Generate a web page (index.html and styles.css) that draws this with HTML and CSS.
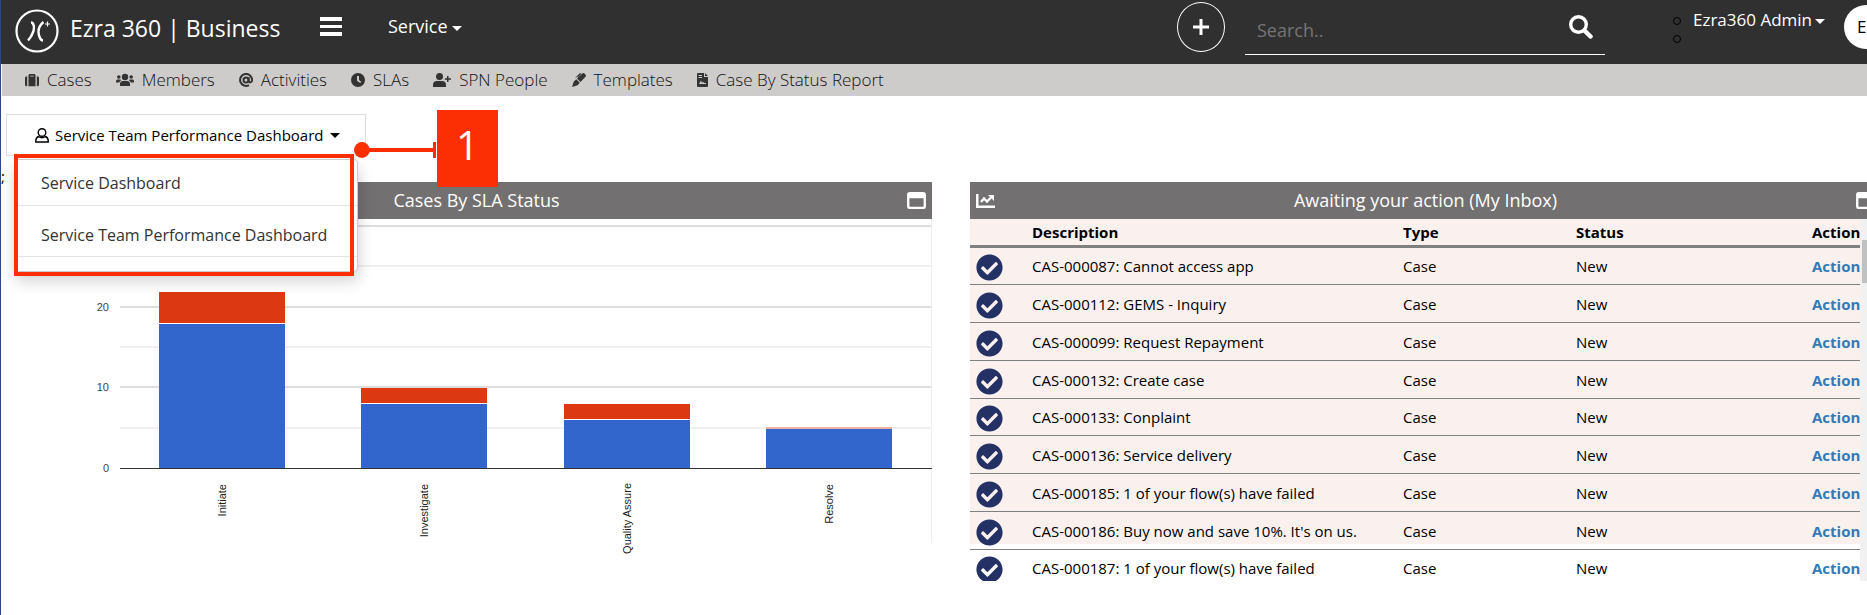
FILE: index.html
```html
<!DOCTYPE html>
<html lang="en">
<head>
<meta charset="utf-8">
<title>Ezra 360 | Business</title>
<link rel="stylesheet" href="styles.css">
</head>
<body>
<svg class="sprite" aria-hidden="true">
  <symbol id="check" viewBox="0 0 512 512"><path d="M504 256c0 137-111 248-248 248S8 393 8 256 119 8 256 8s248 111 248 248zM227.300 387.300l184-184c6.200-6.200 6.200-16.400 0-22.600l-22.600-22.600c-6.200-6.200-16.400-6.200-22.600 0L216 308.100l-70.100-70.100c-6.200-6.200-16.400-6.200-22.600 0l-22.600 22.600c-6.200 6.200-6.200 16.400 0 22.600l104 104c6.200 6.300 16.400 6.300 22.600.1z"/></symbol>
  <symbol id="window" viewBox="0 0 20 18"><path fill-rule="evenodd" d="M3 0h14a3 3 0 0 1 3 3v12a3 3 0 0 1-3 3H3a3 3 0 0 1-3-3V3a3 3 0 0 1 3-3zM2.500 6.500v8.500a.5.500 0 0 0 .5.500h14a.5.500 0 0 0 .5-.5V6.500z"/></symbol>
  <symbol id="trend" viewBox="0 0 19 14"><path d="M0 0h2.500v11.500H19V14H0z"/><path d="M5 8l3-3.500 3 3L15 3.500" fill="none" stroke="#fff" stroke-width="2.400"/><path d="M12 1h6v6z"/></symbol>
</svg>
<header class="topbar">
  <a class="brand" href="#">
    <svg class="logo" viewBox="0 0 44 44" fill="none" stroke="#fff"><circle cx="22" cy="22" r="20.500" stroke-width="2.200"/><path stroke-width="2.400" d="M16 13.500c3 0 3.500 5.500 2.500 8.500s-3 7-5.500 9.500M28.500 13c-3 2.500-5 6-5 9.500s1.500 9 4.500 9"/><path stroke-width="1.200" d="M32.500 12.500v5M30 15h5"/></svg>
    <span>Ezra 360 | Business</span>
  </a>
  <button class="burger" aria-label="Menu"><svg viewBox="0 0 22 19"><path d="M0 0h22v4H0zM0 8h22v3H0zM0 15h22v4H0z"/></svg></button>
  <button class="service">Service <i class="caret"></i></button>
  <button class="add" aria-label="Add"><svg viewBox="0 0 16 16"><path d="M6.500 0h3v6.500H16v3H9.500V16h-3V9.500H0v-3h6.500z"/></svg></button>
  <form class="search">
    <input type="text" placeholder="Search.." aria-label="Search">
    <button type="button" aria-label="Search"><svg viewBox="0 0 24 24" fill="none" stroke="#fff"><circle cx="9.500" cy="9.500" r="7.800" stroke-width="3.400"/><path stroke-width="4.500" stroke-linecap="round" d="M16 16l5.500 5.500"/></svg></button>
  </form>
  <div class="account">
    <div class="dots"><i></i><i></i></div>
    <button class="admin">Ezra360 Admin<i class="caret"></i></button>
    <span class="avatar">Ez</span>
  </div>
</header>
<nav class="menu">
  <a href="#"><svg viewBox="0 0 16 14"><path fill-rule="evenodd" d="M2.500 3v11H1.500A1.500 1.500 0 0 1 0 12.500v-8A1.500 1.500 0 0 1 1.500 3zM13.500 3h1A1.500 1.500 0 0 1 16 4.500v8a1.500 1.500 0 0 1-1.500 1.500h-1zM4 14V1.500A1.500 1.500 0 0 1 5.500 0h5A1.500 1.500 0 0 1 12 1.500V14zM6 2v1h4V2z"/></svg>Cases</a>
  <a href="#"><svg class="wide" viewBox="0 0 18 14"><circle cx="9" cy="4" r="3.200"/><circle cx="2.800" cy="4" r="1.800"/><circle cx="15.200" cy="4" r="1.800"/><path d="M4 13v-2a3 3 0 0 1 3-3h4a3 3 0 0 1 3 3v2zM0 9V8a1.500 1.500 0 0 1 1.500-1.500h3L5 7.500Q3.500 8 3.300 9.500H0zM18 9V8a1.500 1.500 0 0 0-1.500-1.500h-3l-.5 1q1.500.5 1.700 2H18z"/></svg>Members</a>
  <a href="#"><svg class="line" viewBox="0 0 14 14"><circle cx="7" cy="7" r="2.500"/><path d="M9.700 4.300v4c0 1.500 3.400 1.800 3.400-1.300A6 6 0 1 0 10 12.200"/></svg>Activities</a>
  <a href="#"><svg viewBox="0 0 14 14"><path fill-rule="evenodd" d="M7 0a7 7 0 1 1 0 14A7 7 0 0 1 7 0zM6 3v4.700l3.200 2.400 1-1.400L8 7V3z"/></svg>SLAs</a>
  <a href="#"><svg class="wide" viewBox="0 0 18 14"><circle cx="6.500" cy="3.500" r="3.500"/><path d="M0 14v-2a4 4 0 0 1 4-4h5a4 4 0 0 1 4 4v2zM14 3h1.500v2.200H18v1.600h-2.500V9H14V6.800h-2.200V5.200H14z"/></svg>SPN People</a>
  <a href="#"><svg viewBox="0 0 14 14"><path d="M10 .7a2 2 0 0 1 2.800.2l.4.400a2 2 0 0 1 .1 2.800L8.500 9 5 5.500zM4.300 6.200l3.500 3.500-2.300 2.500L0 14l1.800-5.500zM3.500 4.500L7.500.6q1-.8 2 0L6 4.200l-1-.8-1 1.600z"/></svg>Templates</a>
  <a href="#"><svg class="doc" viewBox="0 0 11 14"><path fill-rule="evenodd" d="M0 1a1 1 0 0 1 1-1h6v4h4v9a1 1 0 0 1-1 1H1a1 1 0 0 1-1-1zM8 0l3 3H8zM1.500 2v1H5V2zM1.500 4v1H5V4zM2 11h7v-1H7L6 8.500 5 10 4 7.500z"/></svg>Case By Status Report</a>
</nav>
<main class="page">
  <div class="picker">
    <button class="current"><svg viewBox="0 0 14 15" fill="none" stroke="#000" stroke-width="1.400"><circle cx="7" cy="4.500" r="3.800"/><path d="M3.500 8.500C1.500 9.500.8 11 .8 12.500V14h12.400v-1.500c0-1.500-.7-3-2.700-4Q7 11 3.500 8.500z"/></svg>Service Team Performance Dashboard <i class="caret"></i></button>
    <ul class="options">
      <li><a href="#">Service Dashboard</a></li>
      <li><a href="#">Service Team Performance Dashboard</a></li>
    </ul>
    <div class="outline"></div>
    <div class="callout">
      <svg viewBox="0 0 84 20"><circle cx="8" cy="10" r="8"/><path d="M8 8h72V2h3v16h-3v-6H8z"/></svg>
      <b>1</b>
    </div>
  </div>
  <div class="stray">;</div>
  <div class="panels">
    <section class="panel">
      <header><svg class="trend"><use href="#trend"/></svg><h2>Cases By SLA Status</h2><svg class="win"><use href="#window"/></svg></header>
      <svg class="chart" viewBox="15 0 911 344" role="img" aria-label="Cases by SLA status">
        <g class="major"><path d="M114 7h812M114 88h812M114 168h812"/></g>
        <g class="minor"><path d="M114 47h812M114 128h812M114 209h812"/></g>
        <path class="edge" d="M925 0h1v324h-1z"/>
        <path class="red" d="M153 73h126v31H153zM355 169h126v15H355zM558 185h126v15H558z"/>
        <path class="blue" d="M153 105h126v144H153zM355 185h126v64H355zM558 201h126v48H558zM760 210h126v39H760z"/>
        <path class="pink" d="M760 208h126v2H760z"/>
        <path class="axis" d="M114 249h812v1H114z"/>
        <g class="scale"><text x="103" y="92">20</text><text x="103" y="172">10</text><text x="103" y="253">0</text></g>
        <g class="names">
          <text transform="translate(220 265) rotate(-90)">Initiate</text>
          <text transform="translate(422 265) rotate(-90)">Investigate</text>
          <text transform="translate(625 264) rotate(-90)">Quality Assure</text>
          <text transform="translate(827 265) rotate(-90)">Resolve</text>
        </g>
      </svg>
    </section>
    <section class="panel inbox">
      <header><svg class="trend"><use href="#trend"/></svg><h2>Awaiting your action (My Inbox)</h2><svg class="win"><use href="#window"/></svg></header>
      <div class="scroller">
        <div class="rows">
          <table>
            <thead><tr><th class="c-icon"></th><th class="c-desc">Description</th><th class="c-type">Type</th><th class="c-status">Status</th><th class="c-action">Action</th></tr></thead>
            <tbody>
              <tr><td><svg><use href="#check"/></svg></td><td>CAS-000087: Cannot access app</td><td>Case</td><td>New</td><td><a href="#">Action</a></td></tr>
              <tr><td><svg><use href="#check"/></svg></td><td>CAS-000112: GEMS - Inquiry</td><td>Case</td><td>New</td><td><a href="#">Action</a></td></tr>
              <tr><td><svg><use href="#check"/></svg></td><td>CAS-000099: Request Repayment</td><td>Case</td><td>New</td><td><a href="#">Action</a></td></tr>
              <tr><td><svg><use href="#check"/></svg></td><td>CAS-000132: Create case</td><td>Case</td><td>New</td><td><a href="#">Action</a></td></tr>
              <tr><td><svg><use href="#check"/></svg></td><td>CAS-000133: Conplaint</td><td>Case</td><td>New</td><td><a href="#">Action</a></td></tr>
              <tr><td><svg><use href="#check"/></svg></td><td>CAS-000136: Service delivery</td><td>Case</td><td>New</td><td><a href="#">Action</a></td></tr>
              <tr><td><svg><use href="#check"/></svg></td><td>CAS-000185: 1 of your flow(s) have failed</td><td>Case</td><td>New</td><td><a href="#">Action</a></td></tr>
              <tr><td><svg><use href="#check"/></svg></td><td>CAS-000186: Buy now and save 10%. It's on us.</td><td>Case</td><td>New</td><td><a href="#">Action</a></td></tr>
              <tr><td><svg><use href="#check"/></svg></td><td>CAS-000187: 1 of your flow(s) have failed</td><td>Case</td><td>New</td><td><a href="#">Action</a></td></tr>
            </tbody>
          </table>
        </div>
        <div class="track"><i class="thumb"></i></div>
      </div>
    </section>
  </div>
</main>
</body>
</html>
```
FILE: styles.css
```css
* { box-sizing: border-box; }
body {
  margin: 0;
  min-height: 100vh;
  border-left: 1px solid #2a4a86;
  background: #fff;
  color: #000;
  font: 15px/20px "Open Sans", "Noto Sans", sans-serif;
  overflow: hidden;
}
button, input { font: inherit; color: inherit; background: none; border: 0; padding: 0; margin: 0; }
a { color: inherit; text-decoration: none; }
svg { display: block; flex: none; }
.sprite { width: 0; height: 0; position: absolute; }
.caret {
  display: inline-block;
  border: 5px solid transparent;
  border-top-color: currentColor;
  border-bottom: 0;
  vertical-align: middle;
}

.topbar {
  display: flex;
  align-items: flex-start;
  height: 64px;
  background: #303030;
  color: #fff;
}
.brand { display: flex; align-items: center; gap: 11px; padding: 9px 0 0 14px; width: 319px; font-size: 23px; line-height: 38px; }
.brand span { padding-bottom: 6px; white-space: nowrap; }
.logo { width: 44px; height: 44px; }
.burger { margin-top: 17px; width: 22px; height: 19px; }
.burger svg { width: 22px; height: 19px; fill: #fff; }
.service { margin: 14px 0 0 46px; font-size: 18px; line-height: 24px; }
.add {
  display: grid;
  place-items: center;
  width: 48px;
  height: 50px;
  margin: 2px 20px 0 auto;
  border: 1px solid #fff;
  border-radius: 50%;
}
.add svg { width: 16px; height: 16px; fill: #fff; }
.search { display: flex; width: 360px; height: 55px; border-bottom: 1px solid #fff; }
.search input { flex: 1; min-width: 0; padding: 5px 12px 0; font-size: 18px; outline: 0; }
.search input::placeholder { color: #757575; opacity: 1; }
.search button { width: 24px; margin-right: 12px; }
.search svg { width: 24px; height: 24px; }
.account { display: flex; width: 262px; overflow: hidden; }
.dots { display: grid; align-content: start; gap: 10px; padding: 17px 12px 0 68px; }
.dots i { width: 8px; height: 8px; border: 1px solid #000; border-radius: 50%; }
.admin { height: 40px; font-size: 17px; white-space: nowrap; }
.admin .caret { margin-left: 3px; }
.avatar { flex: none; width: 44px; height: 44px; margin: 5px 0 0 19px; padding-left: 13px; border-radius: 50%; background: #fff; color: #000; font-size: 17px; line-height: 43px; }

.menu { display: flex; gap: 24px; height: 32px; margin-left: 1px; padding-left: 23px; background: #cecccb; color: #111; font-size: 17px; font-weight: 300; line-height: 32px; }
.menu a { display: flex; align-items: center; gap: 8px; white-space: nowrap; }
.menu svg { width: 14px; height: 14px; fill: #333; }
.menu .wide { width: 18px; }
.menu .doc { width: 11px; }
.menu .line { fill: none; stroke: #333; stroke-width: 2; }

.page { position: relative; padding-top: 18px; }
.picker { position: relative; width: 360px; margin-left: 5px; }
.current { display: flex; align-items: center; width: 360px; height: 42px; padding-left: 28px; border: 1px solid #ddd; font-size: 15px; }
.current svg { width: 14px; height: 15px; margin-right: 6px; }
.current .caret { margin-left: 7px; }
.options {
  position: absolute;
  left: 9px;
  top: 45px;
  z-index: 2;
  width: 343px;
  margin: 0;
  padding: 0 0 14px;
  list-style: none;
  background: #fff;
  border: 1px solid #ccc;
  border-radius: 4px;
  box-shadow: 0 8px 16px rgba(0, 0, 0, .2);
  color: #333;
  font-size: 16px;
  white-space: nowrap;
}
.options li { height: 51px; padding: 6px 25px 0; border-bottom: 1px solid #e5e5e5; line-height: 46px; }
.options li:first-child { height: 46px; padding-top: 0; }
.outline { position: absolute; left: 8px; top: 40px; z-index: 3; width: 340px; height: 122px; border: 4px solid #fc2e04; }
.callout { position: absolute; left: 348px; top: -4px; z-index: 3; display: flex; align-items: flex-start; }
.callout svg { width: 83px; height: 20px; margin-top: 30px; fill: #fc2e04; }
.callout b { width: 61px; height: 77px; background: #fc2e04; color: #fff; font: 40px/70px "Open Sans", sans-serif; text-align: center; }
.stray { position: absolute; left: 0; top: 70px; line-height: 20px; }

.panels { display: grid; grid-template-columns: 1fr 1fr; gap: 38px; margin: 26px -14px 0 20px; }
.panel header { display: flex; align-items: center; justify-content: space-between; height: 37px; padding: 0 6px; background: #727070; color: #fff; }
.panel h2 { margin: 0; font-size: 18px; font-weight: 400; line-height: 34px; padding-bottom: 2px; }
.win { width: 19px; height: 17px; fill: #fff; }
.trend { width: 19px; height: 14px; fill: #fff; }
.chart { width: 100%; height: auto; overflow: visible; }
.major, .minor { fill: none; stroke-width: 2; stroke: #ddd; }
.minor { stroke: #f0f0f0; }
.edge { fill: #eee; }
.axis { fill: #333; }
.red { fill: #dc3912; }
.blue { fill: #3366cc; }
.pink { fill: #eeb0a0; }
.scale, .names { font: 11px "Liberation Sans", Arial, sans-serif; fill: #444; text-anchor: end; }
.names { fill: #222; }

.scroller { display: flex; height: 362px; }
.rows { flex: 1; overflow: hidden; background: linear-gradient(#faf1ef 325px, #fff 325px); }
.track { flex: none; width: 21px; background: #f1f1f1; padding: 21px 2px 0; }
.thumb { display: block; height: 43px; background: #c1c1c1; }
table { width: 100%; border-collapse: separate; border-spacing: 0; table-layout: fixed; }
th { padding: 0; height: 29px; border-bottom: 3px solid #808080; text-align: left; font-weight: 700; line-height: 26px; }
td { padding: 0; height: 38px; border-bottom: 1px solid #808080; line-height: 36px; white-space: nowrap; }
tr:nth-child(4n+1) td { height: 37px; }
td svg { width: 27px; height: 27px; margin: 3px 0 0 6px; fill: #233164; }
.c-icon { width: 62px; }
.c-type { width: 173px; }
.c-status { width: 236px; }
.c-action { width: 48px; }
td a { color: #337ab7; font-weight: 700; }
```
